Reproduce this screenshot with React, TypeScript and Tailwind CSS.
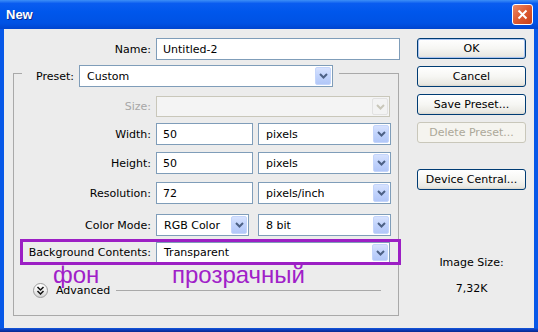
import React from "react";

const Chevron = ({ color = "#4d6185" }: { color?: string }) => (
  <svg width="9" height="6" viewBox="0 0 9 6">
    <path d="M1 1 L4.5 4.5 L8 1" stroke={color} strokeWidth="2" fill="none" />
  </svg>
);

function Combo({ value, className, disabled }: { value: string; className: string; disabled?: boolean }) {
  return (
    <div
      className={`flex h-full border ${
        disabled ? "border-[#c9c7ba] bg-[#f4f4f4]" : "border-[#7f9db9] bg-white"
      } ${className}`}
    >
      <div className="flex-1 flex items-center pl-[7px] text-black">{value}</div>
      {disabled ? (
        <div className="w-[16px] m-[1px] rounded-[2px] border border-[#e2e2e2] bg-[#f3f3f3] flex items-center justify-center">
          <Chevron color="#c9c7ba" />
        </div>
      ) : (
        <div className="w-[16px] m-[1px] rounded-[2px] border border-[#c4d5fb] bg-[linear-gradient(180deg,#d7e2fe_0%,#c1d3fc_50%,#b2c7f8_100%)] flex items-center justify-center">
          <Chevron />
        </div>
      )}
    </div>
  );
}

function Input({ value, className }: { value: string; className: string }) {
  return (
    <div className={`h-full border border-[#7f9db9] bg-white flex items-center pl-[6px] ${className}`}>{value}</div>
  );
}

function Btn({ label, def, disabled }: { label: string; def?: boolean; disabled?: boolean }) {
  return (
    <div
      className={`h-[21px] w-[109px] rounded-[3px] border flex items-center justify-center ${
        disabled
          ? "border-[#c9c7ba] bg-[#f5f4ef] text-[#aca899]"
          : def
          ? "border-[#003c74] bg-[linear-gradient(180deg,#ffffff_0%,#f6f6f3_50%,#e9e8e2_90%,#d8d5cc_100%)] text-black shadow-[inset_0_0_0_1px_#a9c4f2]"
          : "border-[#003c74] bg-[linear-gradient(180deg,#ffffff_0%,#f6f6f3_50%,#e9e8e2_90%,#d8d5cc_100%)] text-black"
      }`}
    >
      {label}
    </div>
  );
}

export default function App() {
  return (
    <div className="w-[538px] h-[332px] flex flex-col bg-[#0758e8] font-['DejaVu_Sans',sans-serif] text-[11px] leading-[13px] text-black overflow-hidden">
      {/* title bar */}
      <div className="h-[29px] shrink-0 flex items-center justify-between pl-[6px] pr-[5px] bg-[linear-gradient(180deg,#3d8ff7_0%,#0a5cf0_12%,#0057ec_40%,#0052e4_80%,#0045cf_100%)]">
        <span className="font-['Liberation_Sans',sans-serif] font-bold text-[13px] text-white [text-shadow:1px_1px_0_#0a2a8c]">
          New
        </span>
        <div className="w-[21px] h-[21px] rounded-[3px] border border-white bg-[linear-gradient(135deg,#ec8a66_0%,#dd5a31_50%,#c8401a_100%)] flex items-center justify-center">
          <svg width="11" height="11" viewBox="0 0 11 11">
            <path d="M1.5 1.5 L9.5 9.5 M9.5 1.5 L1.5 9.5" stroke="white" strokeWidth="2" />
          </svg>
        </div>
      </div>

      {/* body */}
      <div className="flex-1 flex flex-col">
        <div className="flex-1 mx-[4px] bg-[#ececec] flex relative">
          {/* left column */}
          <div className="w-[396px] flex flex-col pt-[9px]">
            <div className="h-[22px] flex items-center">
              <div className="w-[147px] text-right">Name:</div>
              <Input value="Untitled-2" className="ml-[5px] w-[244px]" />
            </div>

            <div className="mt-[13px] ml-[9px] w-[386px] h-[243px] border border-[#a9a9a9] flex flex-col">
              {/* preset legend */}
              <div className="-mt-[9px] ml-[8px] w-fit h-[22px] bg-[#ececec] flex items-center pr-[6px]">
                <div className="w-[52px] text-right">Preset:</div>
                <Combo value="Custom" className="ml-[5px] w-[254px]" />
              </div>

              <div className="mt-[9px] h-[21px] flex items-center">
                <div className="w-[137px] text-right text-[#a7a7a7]">Size:</div>
                <Combo value="" disabled className="ml-[5px] w-[234px]" />
              </div>

              <div className="mt-[6px] h-[22px] flex items-center">
                <div className="w-[137px] text-right">Width:</div>
                <Input value="50" className="ml-[5px] w-[97px]" />
                <Combo value="pixels" className="ml-[5px] w-[133px]" />
              </div>

              <div className="mt-[7px] h-[22px] flex items-center">
                <div className="w-[137px] text-right">Height:</div>
                <Input value="50" className="ml-[5px] w-[97px]" />
                <Combo value="pixels" className="ml-[5px] w-[133px]" />
              </div>

              <div className="mt-[8px] h-[22px] flex items-center">
                <div className="w-[137px] text-right">Resolution:</div>
                <Input value="72" className="ml-[5px] w-[97px]" />
                <Combo value="pixels/inch" className="ml-[5px] w-[133px]" />
              </div>

              <div className="mt-[10px] h-[22px] flex items-center">
                <div className="w-[137px] text-right">Color Mode:</div>
                <Combo value="RGB Color" className="ml-[5px] w-[93px]" />
                <Combo value="8 bit" className="ml-[9px] w-[133px]" />
              </div>

              <div className="mt-[6px] h-[21px] flex items-center">
                <div className="w-[137px] text-right">Background Contents:</div>
                <Combo value="Transparent" className="ml-[5px] w-[234px]" />
              </div>

              <div className="mt-[19px] h-[16px] flex items-center">
                <div className="ml-[19px] w-[15px] h-[15px] rounded-full border border-[#9c9c9c] bg-[linear-gradient(180deg,#ffffff_0%,#f0f0f0_50%,#d4d4d4_100%)] flex items-center justify-center">
                  <svg width="9" height="9" viewBox="0 0 9 9">
                    <path d="M1.5 1 L4.5 4 L7.5 1 M1.5 5 L4.5 8 L7.5 5" stroke="#111" strokeWidth="1.5" fill="none" />
                  </svg>
                </div>
                <div className="ml-[8px]">Advanced</div>
                <div className="flex-1 h-px bg-[#a9a9a9] ml-[6px] mr-[17px]" />
              </div>
            </div>
          </div>

          {/* right column */}
          <div className="ml-[17px] w-[109px] flex flex-col pt-[9px]">
            <Btn label="OK" def />
            <div className="mt-[7px]">
              <Btn label="Cancel" />
            </div>
            <div className="mt-[7px]">
              <Btn label="Save Preset..." />
            </div>
            <div className="mt-[7px]">
              <Btn label="Delete Preset..." disabled />
            </div>
            <div className="mt-[26px]">
              <Btn label="Device Central..." />
            </div>
            <div className="mt-[66px] text-center">Image Size:</div>
            <div className="mt-[13px] text-center">7,32K</div>
          </div>

          {/* annotations */}
          <div className="absolute left-[16px] top-[210px] w-[381px] h-[26px] border-[3px] border-[#9c1fc4]" />
          <div className="absolute left-[49px] top-[234px] font-['Liberation_Sans',sans-serif] text-[24px] leading-[24px] text-[#a020c8]">
            фон
          </div>
          <div className="absolute left-[168px] top-[234px] font-['Liberation_Sans',sans-serif] text-[24px] leading-[24px] text-[#a020c8]">
            прозрачный
          </div>
        </div>
        <div className="h-[4px] bg-[linear-gradient(180deg,#1559dd_0%,#0a35b0_60%,#082a8c_100%)]" />
      </div>
    </div>
  );
}
